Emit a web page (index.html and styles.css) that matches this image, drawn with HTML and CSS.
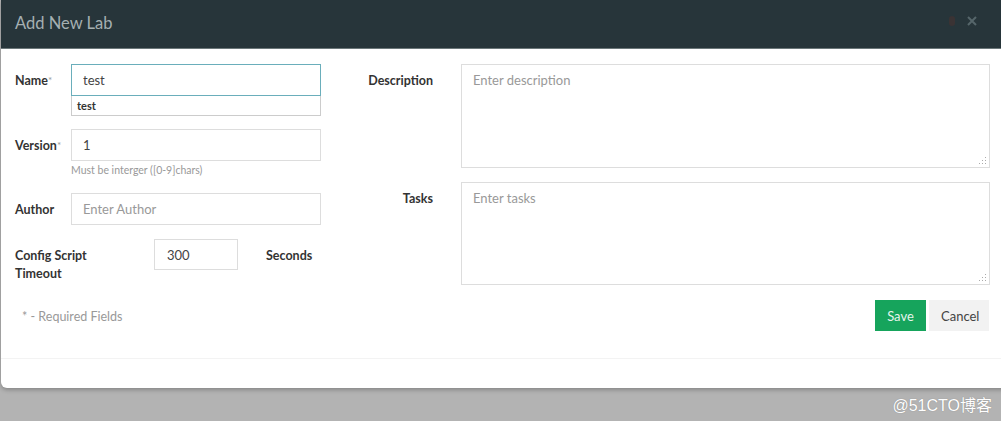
FILE: index.html
```html
<!DOCTYPE html>
<html>
<head>
<meta charset="utf-8">
<link rel="stylesheet" href="styles.css">
</head>
<body>
<div class="modal">
  <div class="modal-header">
    <span class="title">Add New Lab</span>
    <span class="hdr-icons">
      <span class="dot"></span>
      <svg class="close" width="10" height="10" viewBox="0 0 10 10"><path d="M1 1 L9 9 M9 1 L1 9" stroke="#56666a" stroke-width="2"/></svg>
    </span>
  </div>
  <div class="modal-body">
    <div class="col-left">
      <div class="row row-name">
        <label class="lbl lbl-short">Name<sup>*</sup></label>
        <div class="field">
          <input class="inp focus" type="text" value="test">
          <div class="autocomplete">test</div>
        </div>
      </div>
      <div class="row row-version">
        <label class="lbl lbl-short">Version<sup>*</sup></label>
        <div class="field">
          <input class="inp" type="text" value="1">
          <div class="hint">Must be interger ([0-9]chars)</div>
        </div>
      </div>
      <div class="row row-author">
        <label class="lbl lbl-short">Author</label>
        <div class="field">
          <input class="inp" type="text" placeholder="Enter Author">
        </div>
      </div>
      <div class="row row-config">
        <label class="lbl lbl-long">Config Script Timeout</label>
        <input class="inp inp-small" type="text" value="300">
        <span class="lbl seconds">Seconds</span>
      </div>
      <div class="required">* - Required Fields</div>
    </div>
    <div class="col-right">
      <div class="row row-desc">
        <label class="lbl lbl-right">Description</label>
        <div class="ta-wrap">
          <textarea class="ta" placeholder="Enter description"></textarea>
          <span class="grip"></span>
        </div>
      </div>
      <div class="row row-tasks">
        <label class="lbl lbl-right">Tasks</label>
        <div class="ta-wrap">
          <textarea class="ta ta-tasks" placeholder="Enter tasks"></textarea>
          <span class="grip"></span>
        </div>
      </div>
      <div class="actions">
        <button class="btn btn-save">Save</button>
        <button class="btn btn-cancel">Cancel</button>
      </div>
    </div>
  </div>
  <div class="modal-footer"></div>
</div>
<div class="watermark">@51CTO博客</div>
</body>
</html>
```

FILE: styles.css
```css
* { box-sizing: border-box; }
html, body {
  margin: 0;
  height: 100%;
}
body {
  background: #b3b3b3;
  font-family: Lato, "Noto Sans CJK SC", sans-serif;
  color: #333;
  overflow: hidden;
  position: relative;
}
.modal {
  margin-left: 1px;
  width: 1010px;
  height: 388px;
  background: #fff;
  border-radius: 0 0 4px 6px;
  box-shadow: 0 2px 4px rgba(0,0,0,0.25);
  display: flex;
  flex-direction: column;
}
.modal-header {
  height: 49px;
  background: #27353a;
  border-bottom: 1px solid #6b7779;
  display: flex;
  align-items: center;
  justify-content: space-between;
  padding: 0 23px 0 14px;
}
.title {
  color: #a5b0b2;
  font-size: 16.5px;
  margin-top: -2px;
}
.hdr-icons {
  display: flex;
  align-items: center;
  gap: 12px;
  padding-right: 11px;
  margin-top: -6px;
}
.dot {
  width: 6px;
  height: 10px;
  border-radius: 3px;
  background: #3a3334;
}
.modal-body {
  display: flex;
  padding: 15px 0 0 14px;
  height: 310px;
  border-bottom: 1px solid #f3f3f3;
}
.col-left {
  width: 306px;
}
.col-right {
  margin-left: 46px;
  width: 623px;
}
.row {
  display: flex;
  align-items: flex-start;
}
.lbl {
  font-weight: bold;
  font-size: 12.5px;
  color: #333;
}
.lbl sup {
  font-weight: normal;
  color: #999;
  font-size: 10px;
  vertical-align: top;
  position: relative;
  top: -1px;
}
.lbl-short {
  width: 56px;
  line-height: 34px;
}
.field {
  position: relative;
  width: 250px;
}
.inp {
  display: block;
  width: 250px;
  height: 32px;
  border: 1px solid #ddd;
  padding: 0 11px;
  font-family: inherit;
  font-size: 13px;
  color: #444;
  background: #fff;
  outline: none;
}
.inp::placeholder, .ta::placeholder {
  color: #999;
}
.inp.focus {
  border-color: #6aaebb;
}
.autocomplete {
  position: absolute;
  left: 0;
  top: 32px;
  width: 250px;
  height: 20px;
  border: 1px solid #ccc;
  border-top: none;
  background: #fff;
  font-size: 11px;
  font-weight: bold;
  color: #333;
  padding: 3px 5px;
}
.row-version { margin-top: 31px; }
.hint {
  font-size: 10.5px;
  color: #999;
  margin-top: 3px;
}
.row-author { margin-top: 17px; }
.row-config { margin-top: 12px; }
.lbl-long {
  width: 139px;
  line-height: 18px;
  padding-top: 8px;
  padding-right: 60px;
}
.inp-small {
  width: 84px;
  height: 31px;
  padding: 0 12px;
}
.seconds {
  margin-left: 28px;
  line-height: 34px;
}
.required {
  margin-top: 26px;
  margin-left: 7px;
  font-size: 12.5px;
  color: #999;
}
.lbl-right {
  width: 66px;
  text-align: right;
  padding-top: 9px;
  margin-right: 28px;
}
.ta-wrap {
  position: relative;
}
.ta {
  display: block;
  width: 529px;
  height: 104px;
  border: 1px solid #ddd;
  padding: 7px 11px;
  font-family: inherit;
  font-size: 13px;
  resize: none;
  outline: none;
}
.grip {
  position: absolute;
  right: 4px;
  bottom: 4px;
  width: 8px;
  height: 8px;
  background:
    radial-gradient(circle, #aaa 0.8px, transparent 1px) 0 0 / 3px 3px;
  clip-path: polygon(100% 0, 100% 100%, 0 100%);
}
.row-tasks { margin-top: 14px; }
.ta-tasks { height: 103px; }
.actions {
  display: flex;
  justify-content: flex-end;
  gap: 3px;
  margin-top: 15px;
  padding-right: 1px;
}
.btn {
  height: 31px;
  border: none;
  font-family: inherit;
  font-size: 13px;
  padding: 0 12px;
}
.btn-save {
  width: 51px;
  background: #16a45c;
  color: #e6f5ec;
}
.btn-cancel {
  width: 60px;
  background: #f2f2f2;
  color: #444;
}
.modal-footer {
  flex: 1;
}
.watermark {
  position: absolute;
  right: 9px;
  top: 392px;
  color: #fff;
  font-size: 16px;
  font-family: "Liberation Sans", "Noto Sans CJK SC", sans-serif;
  text-shadow: 0 0 1px rgba(0,0,0,0.3);
}
```
